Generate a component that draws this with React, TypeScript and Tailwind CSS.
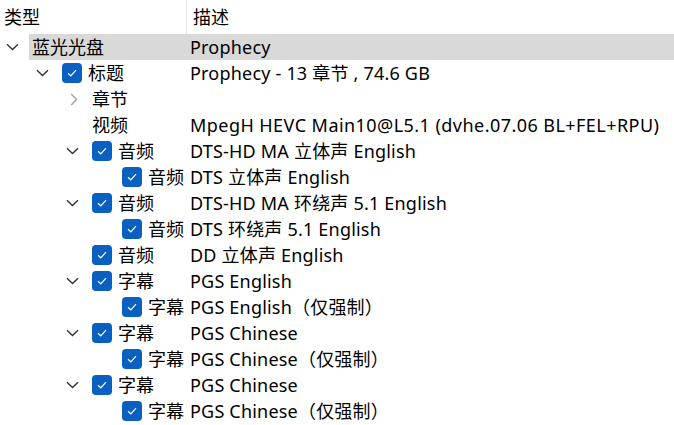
import React from 'react';

type Node = {
    level: number;
    type: string;
    desc: string;
    expander?: 'open' | 'closed';
    checked?: boolean;
    selected?: boolean;
    wide?: boolean;
};

const rows: Node[] = [
    { level: 0, type: '蓝光光盘', desc: 'Prophecy', expander: 'open', selected: true },
    { level: 1, type: '标题', desc: 'Prophecy - 13 章节 , 74.6 GB', expander: 'open', checked: true },
    { level: 2, type: '章节', desc: '', expander: 'closed' },
    { level: 2, type: '视频', desc: 'MpegH HEVC Main10@L5.1 (dvhe.07.06 BL+FEL+RPU)', wide: true },
    { level: 2, type: '音频', desc: 'DTS-HD MA 立体声 English', expander: 'open', checked: true },
    { level: 3, type: '音频', desc: 'DTS 立体声 English', checked: true },
    { level: 2, type: '音频', desc: 'DTS-HD MA 环绕声 5.1 English', expander: 'open', checked: true },
    { level: 3, type: '音频', desc: 'DTS 环绕声 5.1 English', checked: true },
    { level: 2, type: '音频', desc: 'DD 立体声 English', checked: true },
    { level: 2, type: '字幕', desc: 'PGS English', expander: 'open', checked: true },
    { level: 3, type: '字幕', desc: 'PGS English（仅强制）', checked: true },
    { level: 2, type: '字幕', desc: 'PGS Chinese', expander: 'open', checked: true },
    { level: 3, type: '字幕', desc: 'PGS Chinese（仅强制）', checked: true },
    { level: 2, type: '字幕', desc: 'PGS Chinese', expander: 'open', checked: true },
    { level: 3, type: '字幕', desc: 'PGS Chinese（仅强制）', checked: true },
];

const indents = ['pl-0', 'pl-[30px]', 'pl-[60px]', 'pl-[90px]'];
const typeWidths = ['w-[158px]', 'w-[128px]', 'w-[98px]', 'w-[68px]'];

const Expander: React.FC<{ state?: 'open' | 'closed' }> = ({ state }) => {
    if (!state) return null;
    if (state === 'open') {
        return (
            <svg width="13" height="8" viewBox="0 0 13 8" className="ml-[6px]">
                <path d="M1 1.2 L6.5 6.5 L12 1.2" fill="none" stroke="#333" strokeWidth="1.4" />
            </svg>
        );
    }
    return (
        <svg width="8" height="13" viewBox="0 0 8 13" className="ml-[10px]">
            <path d="M1.2 1 L6.5 6.5 L1.2 12" fill="none" stroke="#a0a0a0" strokeWidth="1.4" />
        </svg>
    );
};

const CheckBox: React.FC = () => (
    <div className="w-[20px] h-[20px] rounded-[4px] bg-[#0a60c0] flex items-center justify-center shrink-0 mr-[6px]">
        <svg width="10" height="8" viewBox="0 0 10 8">
            <path d="M1 4.2 L3.8 6.8 L9 1.2" fill="none" stroke="white" strokeWidth="1.2" />
        </svg>
    </div>
);

const App: React.FC = () => {
    return (
        <div
            className="w-[674px] h-[425px] bg-white text-black text-[18px] leading-none overflow-hidden"
            style={{ fontFamily: '"Segoe UI", "Noto Sans", "Noto Sans CJK SC", sans-serif' }}
        >
            <div className="flex h-[34px] items-center">
                <div className="w-[187px] h-full flex items-center pl-[4px] border-r border-[#e5e5e5]">类型</div>
                <div className="pl-[6px]">描述</div>
            </div>
            {rows.map((r, i) => (
                <div key={i} className={`flex h-[26px] items-center ${indents[r.level]}`}>
                    <div className="w-[29px] h-full flex items-center shrink-0">
                        <Expander state={r.expander} />
                    </div>
                    <div className={`flex flex-1 h-full items-center ${r.selected ? 'bg-[#d9d9d9]' : ''}`}>
                        <div className={`h-full flex items-center pl-[3px] shrink-0 ${typeWidths[r.level]}`}>
                            {r.checked && <CheckBox />}
                            <span className="whitespace-nowrap">{r.type}</span>
                        </div>
                        <div className={`pl-[3px] whitespace-nowrap ${r.wide ? 'tracking-[0.45px]' : 'tracking-[0.2px]'}`}>
                            {r.desc}
                        </div>
                    </div>
                </div>
            ))}
        </div>
    );
};

export default App;
